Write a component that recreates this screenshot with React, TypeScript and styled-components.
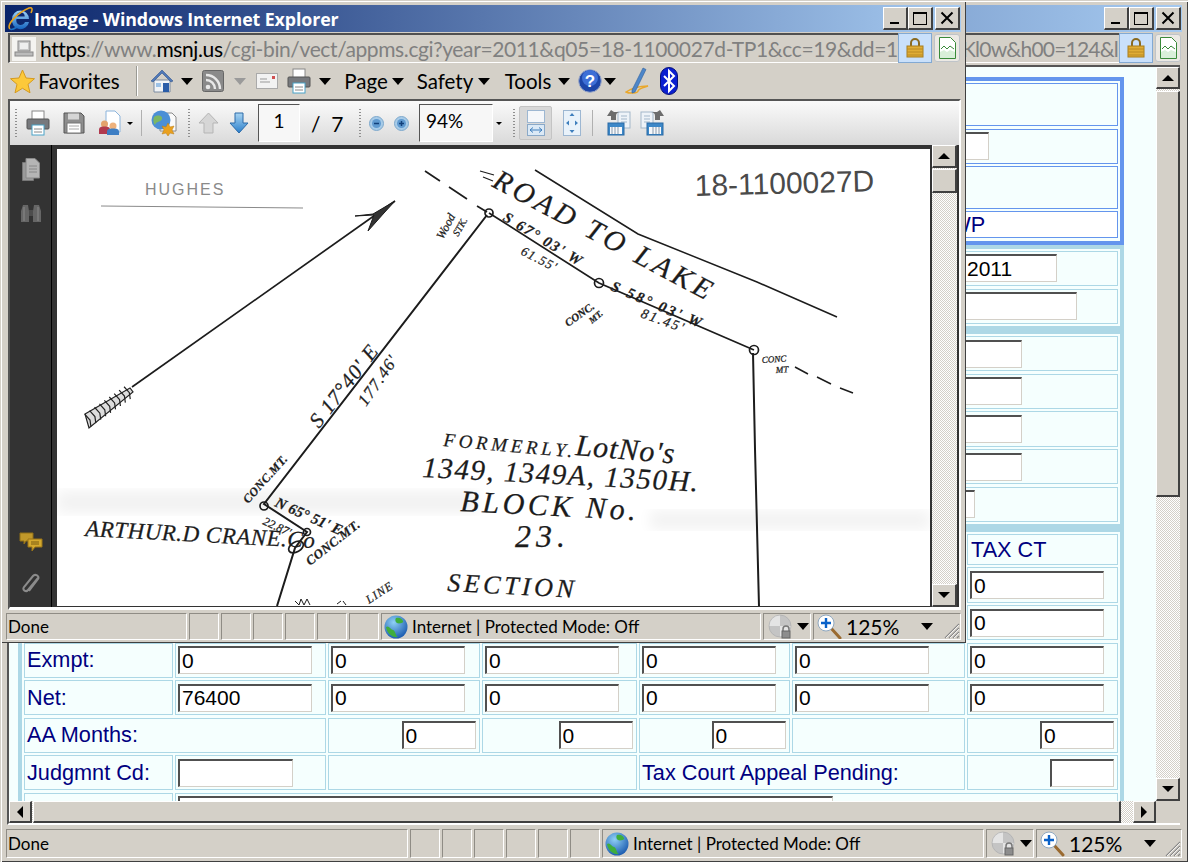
import React from "react";
import styled, { createGlobalStyle, css } from "styled-components";

const ui = `Lato, "Open Sans", sans-serif`;
const face = "#d4d0c8";

const GlobalStyle = createGlobalStyle`
  html, body { margin: 0; padding: 0; background: ${face}; }
  * { box-sizing: border-box; }
  svg { flex: none; }
`;

const outset = css`
  background: ${face};
  border-style: solid;
  border-width: 1px 2px 2px 1px;
  border-color: #fff #404040 #404040 #fff;
`;
const dither = css`
  background: repeating-conic-gradient(${face} 0 25%, #fff 0 50%) 0 0 / 2px 2px;
`;

const Desktop = styled.div`
  position: relative;
  width: 1188px;
  height: 862px;
  overflow: hidden;
`;
const BackWindow = styled.div`
  width: 1188px;
  height: 862px;
  display: flex;
  flex-direction: column;
  padding: 5px 6px 3px 5px;
  background: ${face};
  box-shadow: inset 1px 1px 0 ${face}, inset 2px 2px 0 #fff, inset -1px -1px 0 #404040;
`;
const FrontWindow = styled(BackWindow)`
  position: absolute;
  top: 0;
  left: 0;
  width: 966px;
  height: 643px;
  padding-right: 5px;
`;
const TitleBar = styled.div`
  flex: none;
  height: 27px;
  display: flex;
  align-items: center;
  padding: 0 1px 0 2px;
  background: linear-gradient(90deg, #0a246a, #a6caf0);
`;
const TitleText = styled.span`
  flex: 1;
  margin-left: 0;
  font: bold 17.8px "Open Sans", sans-serif;
  letter-spacing: -0.1px;
  color: #fff;
  white-space: nowrap;
`;
const CaptionButton = styled.span<{ $gap?: number }>`
  ${outset}
  width: 25px;
  height: 23px;
  margin-left: ${(p) => p.$gap ?? 0}px;
  display: flex;
  align-items: center;
  justify-content: center;
`;
const AddressBar = styled.div`
  flex: none;
  height: 30px;
  margin-top: 1px;
  padding-left: 3px;
  display: flex;
`;
const UrlField = styled.div<{ $end?: boolean }>`
  flex: 1;
  min-width: 0;
  overflow: hidden;
  display: flex;
  align-items: center;
  justify-content: ${(p) => (p.$end ? "flex-end" : "flex-start")};
  padding: 0 1px 0 2px;
  border-style: solid;
  border-width: 2px 0 1px 2px;
  border-color: #505050 #fff #fff #505050;
  font: 21px ${ui};
  letter-spacing: ${(p) => (p.$end ? "-0.8px" : "-0.385px")};
  white-space: nowrap;
  color: #808080;
`;
const UrlText = styled.span`
  margin-left: 4px;
  b { font-weight: 400; color: #000; }
`;
const LockBox = styled.div`
  flex: none;
  width: 34px;
  display: flex;
  align-items: center;
  justify-content: center;
  background: #c9e0fb;
  border: 1px solid #82a9d3;
`;
const ReportButton = styled.div`
  flex: none;
  width: 26px;
  height: 28px;
  margin: 1px 1px 0 2px;
  display: flex;
  align-items: center;
  justify-content: center;
  border: 1px solid #bfc4c9;
  border-radius: 3px;
  background: #ece9e4;
`;
const CommandBar = styled.div`
  flex: none;
  height: 36px;
  display: flex;
  align-items: center;
  font: 20.5px ${ui};
  color: #000;
`;
const Slot = styled.span<{ $ml?: number; $w?: number }>`
  flex: none;
  display: inline-flex;
  align-items: center;
  justify-content: center;
  margin-left: ${(p) => p.$ml ?? 0}px;
  width: ${(p) => (p.$w ? `${p.$w}px` : "auto")};
  white-space: nowrap;
`;
const Caret = styled.i<{ $ml?: number; $off?: boolean; $small?: boolean }>`
  flex: none;
  display: block;
  margin-left: ${(p) => p.$ml ?? 0}px;
  border-style: solid;
  border-width: ${(p) => (p.$small ? "3px 3px 0" : "7px 6px 0")};
  border-color: ${(p) => (p.$off ? "#9a9a9a" : "#000")} transparent transparent;
`;
const Divider = styled.span<{ $ml: number; $h?: number }>`
  flex: none;
  width: 2px;
  height: ${(p) => p.$h ?? 30}px;
  margin-left: ${(p) => p.$ml}px;
  border-left: 1px solid #9a9a94;
  border-right: 1px solid #fff;
`;

const ReaderFrame = styled.div`
  flex: none;
  height: 511px;
  margin: 0 0 2px 3px;
  display: flex;
  flex-direction: column;
  border-style: solid;
  border-width: 2px 2px 3px 2px;
  border-color: #555 #fff #fff #555;
`;
const ReaderTools = styled.div`
  flex: none;
  height: 44px;
  display: flex;
  align-items: center;
  background: linear-gradient(#fafafa, #d9d9d9);
`;
const Grip = styled.span<{ $ml: number }>`
  flex: none;
  width: 2px;
  height: 28px;
  margin-left: ${(p) => p.$ml}px;
  background: repeating-linear-gradient(#8f8f8f 0 1px, transparent 1px 3px);
`;
const ToolSep = styled.span<{ $ml: number }>`
  flex: none;
  width: 1px;
  height: 26px;
  margin-left: ${(p) => p.$ml}px;
  background: #b0b0b0;
`;
const BoxField = styled.span<{ $ml: number; $w: number; $center?: boolean }>`
  flex: none;
  width: ${(p) => p.$w}px;
  height: 38px;
  margin-left: ${(p) => p.$ml}px;
  padding: 0 ${(p) => (p.$center ? 0 : 6)}px 6px;
  display: flex;
  align-items: center;
  justify-content: ${(p) => (p.$center ? "center" : "flex-start")};
  background: #f7f7f7;
  border-style: solid;
  border-width: 1px;
  border-color: #555 #fff #fff #555;
  font: 19px ${ui};
`;
const PageCount = styled.span<{ $ml: number; $w: number }>`
  flex: none;
  width: ${(p) => p.$w}px;
  margin-left: ${(p) => p.$ml}px;
  font: 21px ${ui};
  white-space: pre;
`;
const FitButton = styled.span<{ $ml: number }>`
  flex: none;
  width: 33px;
  height: 34px;
  margin-left: ${(p) => p.$ml}px;
  display: flex;
  align-items: center;
  justify-content: center;
  background: #d8d8d8;
  border: 1px solid #c4c4c4;
  border-radius: 2px;
`;
const ReaderBody = styled.div`
  flex: 1;
  min-height: 0;
  display: flex;
  background: #333;
`;
const SideRail = styled.div`
  flex: none;
  width: 42px;
  padding: 13px 0 11px;
  display: flex;
  flex-direction: column;
  align-items: center;
  border-right: 1px solid #000;
`;
const RailIcon = styled.span<{ $push?: boolean; $mt?: number }>`
  display: flex;
  margin-top: ${(p) => (p.$push ? "auto" : `${p.$mt ?? 0}px`)};
`;
const PageArea = styled.div`
  flex: none;
  width: 873px;
  height: 457px;
  margin: 4px 2px 0 5px;
  background: #fff;
  overflow: hidden;
`;
const MapSvg = styled.svg`
  display: block;
  text {
    font-family: "Liberation Serif", serif;
    font-style: italic;
    fill: #1c1c1c;
    stroke: #1c1c1c;
    stroke-width: 0.25;
  }
  text.pencil {
    font-family: "Liberation Sans", sans-serif;
    font-style: normal;
    stroke: none;
  }
`;

const VScroll = styled.div<{ $w: number }>`
  flex: none;
  width: ${(p) => p.$w}px;
  display: flex;
  flex-direction: column;
  ${dither}
`;
const ScrollButton = styled.span<{ $h: number; $w?: number }>`
  ${outset}
  flex: none;
  height: ${(p) => p.$h}px;
  width: ${(p) => (p.$w ? `${p.$w}px` : "auto")};
  display: flex;
  align-items: center;
  justify-content: center;
`;
const ScrollThumb = styled.span<{ $h: number; $mt: number }>`
  ${outset}
  flex: none;
  height: ${(p) => p.$h}px;
  margin-top: ${(p) => p.$mt}px;
`;
const ScrollSpace = styled.span`
  flex: 1;
`;
const ArrowGlyph = styled.i<{ $dir: "up" | "down" | "left" | "right" }>`
  display: block;
  border-style: solid;
  ${(p) =>
    p.$dir === "up" &&
    css`border-width: 0 6px 6px; border-color: transparent transparent #000;`}
  ${(p) =>
    p.$dir === "down" &&
    css`border-width: 6px 6px 0; border-color: #000 transparent transparent;`}
  ${(p) =>
    p.$dir === "left" &&
    css`border-width: 6px 6px 6px 0; border-color: transparent #000 transparent transparent;`}
  ${(p) =>
    p.$dir === "right" &&
    css`border-width: 6px 0 6px 6px; border-color: transparent transparent transparent #000;`}
`;

const StatusBar = styled.div<{ $h: number; $mt: number }>`
  flex: none;
  height: ${(p) => p.$h}px;
  margin-top: ${(p) => p.$mt}px;
  padding-left: 1px;
  display: flex;
  gap: 2px;
  font: 17px ${ui};
  color: #000;
`;
const StatusPane = styled.div<{ $w: number; $grow?: boolean }>`
  flex: ${(p) => (p.$grow ? 1 : "none")};
  width: ${(p) => p.$w}px;
  display: flex;
  align-items: center;
  white-space: nowrap;
  overflow: hidden;
  border-style: solid;
  border-width: 1px;
  border-color: #8f8c85 #fff #fff #8f8c85;
`;
const DoneText = styled.span`
  margin-left: 1px;
`;
const ZoneText = styled.span`
  margin-left: 4px;
`;
const ZoomText = styled.span`
  margin-left: 4px;
  font-size: 21px;
`;
const GripArea = styled.span`
  margin-left: auto;
  display: flex;
  align-self: flex-end;
`;

const Viewport = styled.div`
  flex: none;
  height: 760px;
  margin: 2px 2px 0 2px;
  display: flex;
  flex-direction: column;
  border-top: 2px solid #555;
  border-left: 2px solid #555;
  border-bottom: 2px solid #fff;
`;
const ViewportMain = styled.div`
  flex: 1;
  min-height: 0;
  display: flex;
`;
const PageView = styled.div`
  flex: 1;
  min-width: 0;
  overflow: hidden;
  padding: 10px 0 0 9px;
  background: #f5fffe;
`;
const HScroll = styled.div`
  flex: none;
  height: 22px;
  display: flex;
`;
const HTrack = styled.div`
  flex: 1;
  display: flex;
  ${dither}
`;
const HThumb = styled.span`
  ${outset}
  width: 1088px;
  margin-left: 1px;
`;
const Corner = styled.span`
  flex: none;
  width: 24px;
  background: ${face};
`;

const FormTable = styled.div<{ $blue?: boolean; $rows: string; $cols?: string }>`
  width: 1106px;
  display: grid;
  grid-template-columns: ${(p) => p.$cols ?? "1fr"};
  grid-template-rows: ${(p) => p.$rows};
  gap: 2.5px;
  padding: 2px 2px 2.5px;
  border: 4px solid ${(p) => (p.$blue ? "#6495ed" : "#add8e6")};
  color: #000080;
  font: 21.7px "Liberation Sans", Arial, sans-serif;
  --line: ${(p) => (p.$blue ? "#6495ed" : "#add8e6")};
`;
const Cell = styled.div<{ $span?: number; $pad?: number; $end?: boolean; $white?: boolean }>`
  grid-column: span ${(p) => p.$span ?? 1};
  min-width: 0;
  display: flex;
  align-items: center;
  justify-content: ${(p) => (p.$end ? "flex-end" : "flex-start")};
  padding: 0 ${(p) => (p.$end ? 3 : 0)}px 0 ${(p) => p.$pad ?? 2}px;
  border: 1px solid var(--line);
  background: ${(p) => (p.$white ? "#fff" : "transparent")};
  white-space: nowrap;
`;
const Field = styled.input<{ $w: number }>`
  flex: none;
  width: ${(p) => p.$w}px;
  height: 28px;
  margin: 0;
  padding: 0 0 0 2px;
  background: #fff;
  border-style: solid;
  border-width: 2px 1px 1px 2px;
  border-color: #505050 ${face} ${face} #505050;
  border-radius: 0;
  outline: none;
  color: #000;
  font: 21px "Liberation Sans", Arial, sans-serif;
`;

/* little drawings */
const IELogo = () => (
  <svg width="27" height="27" viewBox="0 0 27 27">
    <defs>
      <linearGradient id="ieb" x1="0" y1="0" x2="0" y2="1">
        <stop offset="0" stopColor="#9fd4f7" />
        <stop offset="1" stopColor="#1565c0" />
      </linearGradient>
    </defs>
    <path d="M5 14a8.5 8.5 0 0 1 17 0H9.5a4.5 4.5 0 0 0 8.5 3h4a8.5 8.5 0 0 1-17-3zm4.7-2.5h8a4 4 0 0 0-8 0z" fill="url(#ieb)" />
    <path d="M3 24C-1 20 10 8 22 3c3-1 4 1 2 5" fill="none" stroke="#e6a11d" strokeWidth="1.6" />
    <path d="M3 24c1 1 4 0 7-2" fill="none" stroke="#1c6fc4" strokeWidth="1.6" />
  </svg>
);
const CapMin = () => (
  <svg width="14" height="14"><rect x="2" y="11" width="9" height="2" fill="#000" /></svg>
);
const CapMax = () => (
  <svg width="16" height="15"><rect x="1.5" y="2" width="13" height="11.5" fill="none" stroke="#000" strokeWidth="1" /><rect x="1" y="1" width="14" height="2" fill="#000" /></svg>
);
const CapClose = () => (
  <svg width="14" height="14"><path d="M1.5 1.5l11 11M12.5 1.5l-11 11" stroke="#000" strokeWidth="2" /></svg>
);
const SiteIcon = () => (
  <svg width="24" height="24" viewBox="0 0 24 24">
    <rect width="24" height="24" fill="#f4f3f0" />
    <rect x="6" y="4" width="12" height="10" fill="#c8c8c8" stroke="#888" />
    <rect x="8" y="6" width="8" height="6" fill="#eee" />
    <rect x="3" y="15" width="18" height="4" fill="#bbb" stroke="#888" />
  </svg>
);
const Lock = () => (
  <svg width="18" height="22" viewBox="0 0 18 22">
    <path d="M5 10V6a4 4 0 0 1 8 0v4" fill="none" stroke="#8a6a20" strokeWidth="2" />
    <rect x="1" y="9" width="16" height="11" fill="#e0ad35" stroke="#a87c1c" />
    <path d="M1 12h16M1 15h16M1 18h16" stroke="#b98a24" />
  </svg>
);
const ReportDoc = () => (
  <svg width="17" height="22" viewBox="0 0 17 22">
    <path d="M.5.5h11l5 5v16H.5z" fill="#fff" stroke="#3a8a3a" />
    <path d="M2 12l3-3 3 3 3-3 4 3" fill="none" stroke="#3a8a3a" />
    <path d="M1 15l4-2 3 2 3-2 5 2v6H1z" fill="#d9efd9" />
  </svg>
);
const Star = () => (
  <svg width="25" height="25" viewBox="0 0 25 25">
    <path d="M12.5 1l3.5 8 8.5.7-6.5 5.6 2 8.5-7.5-4.5-7.5 4.5 2-8.5L.5 9.700l8.500-.7z" fill="#fcc93a" stroke="#d59a1e" />
  </svg>
);
const Home = () => (
  <svg width="24" height="24" viewBox="0 0 24 24">
    <path d="M4 11h16v12H4z" fill="#f1f3f6" stroke="#7a8aa0" />
    <path d="M1 12L12 1l11 11-2 1-9-9-9 9z" fill="#4f78b8" stroke="#33568c" strokeWidth=".6" />
    <rect x="13" y="14" width="6" height="9" fill="#2a5ca8" />
    <rect x="6" y="14" width="5" height="4" fill="#9cc1e6" />
  </svg>
);
const Feed = () => (
  <svg width="22" height="24" viewBox="0 0 22 24">
    <rect x=".5" y="1.500" width="21" height="21" rx="2" fill="#8a8a8a" stroke="#666" />
    <circle cx="6" cy="18" r="2.300" fill="#e8e8e8" />
    <path d="M4 11a9 9 0 0 1 9 9M4 6a14 14 0 0 1 14 14" fill="none" stroke="#e8e8e8" strokeWidth="2.400" />
  </svg>
);
const Mail = () => (
  <svg width="22" height="16" viewBox="0 0 22 16">
    <rect x=".5" y=".5" width="21" height="15" fill="#f2f2f2" stroke="#aaa" />
    <path d="M4 9h10M4 6h7" stroke="#999" />
    <rect x="16" y="3" width="3" height="3" fill="#d05050" />
  </svg>
);
const Printer = () => (
  <svg width="24" height="26" viewBox="0 0 24 26">
    <rect x="6" y="1" width="12" height="9" fill="#fff" stroke="#888" />
    <rect x="1" y="9" width="22" height="10" rx="1" fill="#77797d" stroke="#555" />
    <rect x="6" y="15" width="12" height="10" fill="#fff" stroke="#4aa3c8" />
    <path d="M8 19h8M8 22h8" stroke="#888" />
  </svg>
);
const Help = () => (
  <svg width="24" height="24" viewBox="0 0 24 24">
    <circle cx="12" cy="12" r="11.300" fill="#1d46a8" stroke="#9aa7c8" />
    <circle cx="12" cy="9" r="8" fill="#3d6fd6" />
    <text x="12" y="18" textAnchor="middle" fontFamily="Liberation Sans" fontWeight="bold" fontSize="17" fill="#fff">?</text>
  </svg>
);
const Pen = () => (
  <svg width="26" height="28" viewBox="0 0 26 28">
    <path d="M1 25c6-4 14-6 22-6-6 2-10 3-10 5s-8 3-12 1z" fill="none" stroke="#e9a72b" strokeWidth="1.500" />
    <path d="M7 23L18 1l3 1.500L10 25l-3 1z" fill="#4d86c9" stroke="#2f5f9c" strokeWidth=".6" />
  </svg>
);
const Bluetooth = () => (
  <svg width="18" height="28" viewBox="0 0 18 28">
    <rect x=".5" y=".5" width="17" height="27" rx="8.500" fill="#0a1fd0" stroke="#06107a" />
    <path d="M4 9l10 10-5 5V4l5 5L4 19" fill="none" stroke="#fff" strokeWidth="2" />
  </svg>
);
const Globe = () => (
  <svg width="24" height="26" viewBox="0 0 24 26">
    <defs>
      <radialGradient id="glb" cx=".4" cy=".3" r=".8">
        <stop offset="0" stopColor="#8fd0f5" />
        <stop offset="1" stopColor="#0f4fa8" />
      </radialGradient>
    </defs>
    <circle cx="12" cy="13" r="11.500" fill="url(#glb)" />
    <path d="M2 13c3-2 4 2 7 3s2 6 5 7c-5 1-11-3-12-10zM12 4c4-1 6 1 7 3s-4 3-6 2-2-4-1-5z" fill="#3fae3c" />
  </svg>
);
const SecurityDisc = () => (
  <svg width="26" height="26" viewBox="0 0 26 26">
    <circle cx="13" cy="12" r="11" fill="#e4e4e4" stroke="#bbb" />
    <path d="M13 1a11 11 0 0 1 11 11H13zM2 12a11 11 0 0 0 11 11V12z" fill="#a9a9a9" opacity=".55" />
    <path d="M16 17v-2a3 3 0 0 1 6 0v2" fill="none" stroke="#777" strokeWidth="1.500" />
    <rect x="15" y="17" width="8" height="7" fill="#8d8d8d" stroke="#666" />
  </svg>
);
const ZoomGlass = () => (
  <svg width="25" height="26" viewBox="0 0 25 26">
    <path d="M13 13l10 11" stroke="#9a6a30" strokeWidth="3" strokeLinecap="round" />
    <circle cx="9" cy="9" r="8" fill="#fff" stroke="#8fa8c0" />
    <path d="M9 4v10M4 9h10" stroke="#0a62c9" strokeWidth="2.400" />
  </svg>
);
const SizeGrip = () => (
  <svg width="18" height="18" viewBox="0 0 18 18">
    <path d="M17 3L3 17M17 7L7 17M17 11L11 17M17 15l-2 2" stroke="#888" strokeWidth="1.200" />
    <path d="M17 4L4 17M17 8L8 17M17 12l-5 5" stroke="#fff" strokeWidth=".8" />
  </svg>
);

/* reader toolbar */
const SaveDisk = () => (
  <svg width="22" height="24" viewBox="0 0 22 24">
    <path d="M1 2h17l3 3v17H1z" fill="#8e8e8e" stroke="#555" />
    <rect x="5" y="2.500" width="11" height="6" fill="#d5d5d5" />
    <rect x="4" y="12" width="14" height="10" fill="#fff" stroke="#777" />
    <path d="M6 15h10M6 18h10" stroke="#aaa" />
  </svg>
);
const ShareDoc = () => (
  <svg width="22" height="26" viewBox="0 0 22 26">
    <path d="M7 1h9l5 5v16H7z" fill="#fff" stroke="#8bb4dc" />
    <circle cx="5.500" cy="14" r="3.500" fill="#e3a26d" />
    <path d="M0 24v-4c0-3 2-3.500 5.500-3.500S11 17 11 20v4z" fill="#b13a4f" />
    <circle cx="14" cy="16" r="3.500" fill="#efb27c" />
    <path d="M8 25v-3c0-3 2-3.500 6-3.500s6 .5 6 3.500v3z" fill="#3d7ec4" />
  </svg>
);
const WebDoc = () => (
  <svg width="26" height="28" viewBox="0 0 26 28">
    <path d="M9 4h12l4 4v14H9z" fill="#fafafa" stroke="#8a8a8a" />
    <circle cx="10" cy="11" r="9.500" fill="#4b8fd6" />
    <path d="M3 8c4-3 9-1 8 2s-6 2-7 6c-2-2-2-6-1-8z" fill="#7cb764" />
    <path d="M17 14l2 4 4-1-2 4 2 4-4-1-2 3-2-3-4 1 2-4-2-4 4 1z" fill="#eaa11f" stroke="#b87a10" strokeWidth=".5" />
  </svg>
);
const PageUp = () => (
  <svg width="21" height="22" viewBox="0 0 21 22">
    <path d="M10.500 1L20 11h-5v10H6V11H1z" fill="#d6d6d6" stroke="#b5b5b5" />
  </svg>
);
const PageDown = () => (
  <svg width="20" height="22" viewBox="0 0 20 22">
    <defs>
      <linearGradient id="dn" x1="0" y1="0" x2="0" y2="1">
        <stop offset="0" stopColor="#a8d4f2" />
        <stop offset="1" stopColor="#2b7fcb" />
      </linearGradient>
    </defs>
    <path d="M6 1h8v10h5L10 21 1 11h5z" fill="url(#dn)" stroke="#2c6aa8" />
  </svg>
);
const ZoomDisc = ({ plus }: { plus?: boolean }) => (
  <svg width="15" height="15" viewBox="0 0 15 15">
    <circle cx="7.500" cy="7.500" r="7" fill="#a7cbe8" stroke="#7ea9cc" />
    <circle cx="7.500" cy="7.500" r="4.500" fill="#5f9ad0" />
    <path d={plus ? "M5 7.500h5M7.500 5v5" : "M5 7.500h5"} stroke="#12407a" strokeWidth="1.500" />
  </svg>
);
const FitWidth = () => (
  <svg width="18" height="26" viewBox="0 0 18 26">
    <rect x=".5" y=".5" width="17" height="12" fill="#f5f7fa" stroke="#9db7d2" />
    <rect x=".5" y="14.500" width="17" height="11" fill="#dbe9f6" stroke="#8aa9c8" />
    <path d="M3 20h12M3 20l3-2.500M3 20l3 2.500M15 20l-3-2.500M15 20l-3 2.500" stroke="#3f7fbd" fill="none" />
  </svg>
);
const FitPage = () => (
  <svg width="18" height="26" viewBox="0 0 18 26">
    <rect x=".5" y=".5" width="17" height="25" fill="#e9f2fa" stroke="#9db7d2" />
    <path d="M9 3l-2.500 3h5zM9 23l-2.500-3h5zM3 13l3-2.500v5zM15 13l-3-2.500v5z" fill="#3f7fbd" />
  </svg>
);
const Rotate = ({ flip }: { flip?: boolean }) => (
  <svg width="25" height="28" viewBox="0 0 25 28" style={flip ? { transform: "scaleX(-1)" } : undefined}>
    <rect x="12" y="3" width="12" height="16" fill="#eef3f8" stroke="#a3b7ca" />
    <path d="M15 7h6M15 10h6M15 13h6" stroke="#a3b7ca" />
    <path d="M10 11V7c0-3 2-4 4-4H8L5 1 1 7h4v4z" fill="#6c6c6c" />
    <rect x="2" y="14" width="16" height="12" fill="#3d88c8" stroke="#2b6aa5" />
    <rect x="4" y="18" width="12" height="7" fill="#f6f8fb" />
    <path d="M6 18v7M9 18v7M12 18v7" stroke="#8a9bac" />
  </svg>
);
const RailPages = () => (
  <svg width="18" height="23" viewBox="0 0 18 23">
    <path d="M.5 4.500h11v18H.5z" fill="#9a9a9a" stroke="#777" />
    <path d="M4 .5h9l4.500 4.500v15H4z" fill="#b5b5b5" stroke="#888" />
    <path d="M7 8h8M7 11h8M7 14h8" stroke="#888" />
  </svg>
);
const RailBinoculars = () => (
  <svg width="22" height="20" viewBox="0 0 22 20">
    <path d="M1 8l2-6h5l1 6v11H1zM21 8l-2-6h-5l-1 6v11h8z" fill="#666" />
    <rect x="9" y="7" width="4" height="6" fill="#4d4d4d" />
    <path d="M4 4v14M18 4v14" stroke="#8a8a8a" />
  </svg>
);
const RailComments = () => (
  <svg width="24" height="20" viewBox="0 0 24 20">
    <path d="M1 1h13v8H7l-2 3V9H1z" fill="#c0982a" stroke="#8f6e17" />
    <path d="M9 7h14v8h-7l-3 4v-4H9z" fill="#d4a92e" stroke="#9a7518" />
    <path d="M12 10h8M12 12h8" stroke="#7a5c10" />
  </svg>
);
const RailClip = () => (
  <svg width="20" height="23" viewBox="0 0 20 23">
    <path d="M17 5L7 17c-2 2.500-6 0-4-3L12 3c2-2.500 7 0 5 3L8 18" fill="none" stroke="#8b8b8b" strokeWidth="2" />
  </svg>
);

/* the scanned survey sheet: drawn in page coordinates */
const Lbl = ({ x, y, r = 0, s, ls = 0, w = 400, children }: { x: number; y: number; r?: number; s: number; ls?: number; w?: number; children: React.ReactNode }) => (
  <text transform={`translate(${x} ${y}) rotate(${r})`} fontSize={s} letterSpacing={ls} fontWeight={w}>
    {children}
  </text>
);
const chevrons = [0, 6, 12, 18, 24, 30, 36, 42, 48];
const Fletching = () => (
  <g fill="none" stroke="#222" strokeWidth="1.200">
    <path d="M85 415L130 389 133 393 89 429z" fill="#ddd" />
    {chevrons.map((t) => {
      const px = 90 + 0.82 * t;
      const py = 421 - 0.57 * t;
      return (
        <path
          key={t}
          d={`M${px - 5.300} ${py - 5.900}L${px} ${py}L${px + 0.900} ${py + 6.500}`}
        />
      );
    })}
  </g>
);
const SurveyMap = () => (
  <MapSvg width="873" height="457" viewBox="57 150 873 457">
    <defs>
      <filter id="smear"><feGaussianBlur stdDeviation="7" /></filter>
    </defs>
    <rect x="57" y="492" width="420" height="22" fill="#000" opacity=".05" filter="url(#smear)" />
    <rect x="650" y="512" width="280" height="18" fill="#000" opacity=".05" filter="url(#smear)" />
    <g fill="none" stroke="#1c1c1c" strokeWidth="1.700">
      <path d="M425 172l15 10M449 188l18 12M477 207l10 6" />
      <path d="M489 214L599 284 754 351" />
      <path d="M795 368l13 7M817 378l14 7M840 389l13 5" strokeWidth="1.500" />
      <path d="M535 171L638 235 757 283 837 318" strokeWidth="1.500" />
      <path d="M753 354L755 450 759 607" strokeWidth="2" />
      <path d="M487 216L264 505 307 533 295 549 277 607" strokeWidth="2" />
      <circle cx="489" cy="214" r="4" />
      <circle cx="599" cy="284" r="4.500" />
      <circle cx="754" cy="351" r="4.500" />
      <circle cx="264" cy="507" r="4" />
      <circle cx="307" cy="533" r="3.500" />
      <ellipse cx="296" cy="548" rx="8" ry="5" transform="rotate(-30 296 548)" />
      <path d="M132 388L395 202" />
      <path d="M355 217l18-2 22-13-11 12-16 18 6-16z" fill="#333" strokeWidth="1" />
      <path d="M480 172l14 4M483 178l10 4" strokeWidth="1.200" />
      <path d="M295 602l4 4 2-6 3 6 3-6 3 6M337 605l4-3M343 602l3 4" strokeWidth="1" />
    </g>
    <Fletching />
    <path d="M101 207l202 2" stroke="#8a8a8a" strokeWidth="1" />
    <Lbl x={491} y={187} r={28} s={29} ls={4}>ROAD TO LAKE</Lbl>
    <Lbl x={502} y={221} r={31} s={15} ls={1.600} w={700}>S 67° 03' W</Lbl>
    <Lbl x={520} y={255} r={27} s={13} ls={1.200}>61.55'</Lbl>
    <Lbl x={610} y={291} r={23} s={15} ls={2.400} w={700}>S 58° 03' W</Lbl>
    <Lbl x={640} y={318} r={20} s={14} ls={2}>81.45'</Lbl>
    <Lbl x={568} y={328} r={-35} s={11} w={700}>CONC.</Lbl>
    <Lbl x={592} y={325} r={-40} s={9} w={700}>MT.</Lbl>
    <Lbl x={762} y={364} r={-4} s={9}>CONC</Lbl>
    <Lbl x={776} y={374} r={-4} s={9}>MT</Lbl>
    <Lbl x={443} y={241} r={-62} s={12}>Wood</Lbl>
    <Lbl x={458} y={238} r={-60} s={10}>STK.</Lbl>
    <Lbl x={319} y={430} r={-52} s={21} ls={1}>S 17°40' E</Lbl>
    <Lbl x={366} y={408} r={-55} s={17} ls={1}>177.46'</Lbl>
    <Lbl x={248} y={505} r={-48} s={12} ls={.5} w={700}>CONC.MT.</Lbl>
    <Lbl x={274} y={507} r={24} s={15} w={700}>N 65° 51' E</Lbl>
    <Lbl x={262} y={525} r={25} s={12}>22.87'</Lbl>
    <Lbl x={85} y={537} r={3} s={23} ls={.5}>ARTHUR.D CRANE.Co</Lbl>
    <Lbl x={310} y={567} r={-38} s={13} ls={.5} w={700}>CONC.MT.</Lbl>
    <Lbl x={369} y={605} r={-33} s={12} ls={1}>LINE</Lbl>
    <Lbl x={443} y={447} r={5} s={19} ls={3.700}>FORMERLY.</Lbl>
    <Lbl x={575} y={456} r={5} s={30} ls={1}>LotNo's</Lbl>
    <Lbl x={422} y={478} r={3} s={29} ls={1.500}>1349, 1349A, 1350H.</Lbl>
    <Lbl x={460} y={512} r={3} s={30} ls={3.600}>BLOCK No.</Lbl>
    <Lbl x={515} y={548} s={32} ls={5}>23.</Lbl>
    <Lbl x={447} y={592} r={3} s={26} ls={3.500}>SECTION</Lbl>
    <text className="pencil" x="145" y="196" fontSize="16" letterSpacing="2" style={{ fill: "#8a8a8a" }}>HUGHES</text>
    <text className="pencil" x="695" y="197" fontSize="30" transform="rotate(-1.500 695 197)" style={{ fill: "#4a4a4a" }}>18-1100027D</text>
  </MapSvg>
);

const Caption = () => (
  <>
    <CaptionButton><CapMin /></CaptionButton>
    <CaptionButton><CapMax /></CaptionButton>
    <CaptionButton $gap={2}><CapClose /></CaptionButton>
  </>
);
const ZonePanes = () => (
  <>
    <StatusPane $w={48}>
      <Slot $ml={3}><SecurityDisc /></Slot>
      <Caret $ml={4} />
    </StatusPane>
    <StatusPane $w={145} $grow>
      <Slot $ml={3}><ZoomGlass /></Slot>
      <ZoomText>125%</ZoomText>
      <Caret $ml={22} />
      <GripArea><SizeGrip /></GripArea>
    </StatusPane>
  </>
);

const colWidths = "148.5px 150.5px 151.5px 154.5px 150.5px 172.5px 151px";

function BackForm() {
  return (
    <>
      <FormTable $blue $rows="43px 35px 42.5px 27px">
        <Cell />
        <Cell $pad={900}><Field $w={64} readOnly /></Cell>
        <Cell />
        <Cell $white $pad={912}>TWP</Cell>
      </FormTable>
      <FormTable $rows="35.5px 35px">
        <Cell $pad={938}><Field $w={94} readOnly value="2011" /></Cell>
        <Cell $pad={938}><Field $w={114} readOnly /></Cell>
      </FormTable>
      <FormTable $rows="repeat(5, 35.2px)">
        <Cell $pad={900}><Field $w={97} readOnly /></Cell>
        <Cell $pad={900}><Field $w={97} readOnly /></Cell>
        <Cell $pad={900}><Field $w={97} readOnly /></Cell>
        <Cell $pad={900}><Field $w={97} readOnly /></Cell>
        <Cell $pad={900}><Field $w={50} readOnly /></Cell>
      </FormTable>
      <FormTable $cols={colWidths} $rows="30.5px 35.5px 35px 35px 35px 35px 35px 35px">
        <Cell />
        <Cell />
        <Cell />
        <Cell />
        <Cell />
        <Cell />
        <Cell $pad={3}>TAX CT</Cell>
        {[0, 1].map((r) => (
          <React.Fragment key={r}>
            <Cell />
            {[1, 2, 3, 4, 5, 6].map((c) => (
              <Cell key={c}><Field $w={134} readOnly value="0" /></Cell>
            ))}
          </React.Fragment>
        ))}
        <Cell>Exmpt:</Cell>
        {[1, 2, 3, 4, 5, 6].map((c) => (
          <Cell key={c}><Field $w={134} readOnly value="0" /></Cell>
        ))}
        <Cell>Net:</Cell>
        <Cell><Field $w={134} readOnly value="76400" /></Cell>
        {[2, 3, 4, 5, 6].map((c) => (
          <Cell key={c}><Field $w={134} readOnly value="0" /></Cell>
        ))}
        <Cell $span={2}>AA Months:</Cell>
        <Cell $end><Field $w={74} readOnly value="0" /></Cell>
        <Cell $end><Field $w={74} readOnly value="0" /></Cell>
        <Cell $end><Field $w={74} readOnly value="0" /></Cell>
        <Cell />
        <Cell $end><Field $w={74} readOnly value="0" /></Cell>
        <Cell>Judgmnt Cd:</Cell>
        <Cell><Field $w={115} readOnly /></Cell>
        <Cell $span={2} />
        <Cell $span={2}>Tax Court Appeal Pending:</Cell>
        <Cell $end><Field $w={64} readOnly /></Cell>
        <Cell />
        <Cell $span={6}><Field $w={655} readOnly /></Cell>
      </FormTable>
    </>
  );
}

export default function App() {
  return (
    <>
      <GlobalStyle />
      <Desktop>
        <BackWindow>
          <TitleBar>
            <TitleText />
            <Caption />
          </TitleBar>
          <AddressBar>
            <UrlField $end>
              <UrlText>Kl0w&amp;h00=124&amp;l</UrlText>
            </UrlField>
            <LockBox><Lock /></LockBox>
            <ReportButton><ReportDoc /></ReportButton>
          </AddressBar>
          <Viewport>
            <ViewportMain>
              <PageView><BackForm /></PageView>
              <VScroll $w={24}>
                <ScrollButton $h={22}><ArrowGlyph $dir="up" /></ScrollButton>
                <ScrollThumb $h={406} $mt={2} />
                <ScrollSpace />
                <ScrollButton $h={23}><ArrowGlyph $dir="down" /></ScrollButton>
              </VScroll>
            </ViewportMain>
            <HScroll>
              <HTrack>
                <ScrollButton $h={22} $w={23}><ArrowGlyph $dir="left" /></ScrollButton>
                <HThumb />
                <ScrollSpace />
                <ScrollButton $h={22} $w={23}><ArrowGlyph $dir="right" /></ScrollButton>
              </HTrack>
              <Corner />
            </HScroll>
          </Viewport>
          <StatusBar $h={29} $mt={4}>
            <StatusPane $w={402}><DoneText>Done</DoneText></StatusPane>
            {[0, 1, 2, 3, 4, 5].map((i) => <StatusPane key={i} $w={30} />)}
            <StatusPane $w={382}>
              <Slot $ml={2}><Globe /></Slot>
              <ZoneText>Internet | Protected Mode: Off</ZoneText>
            </StatusPane>
            <ZonePanes />
          </StatusBar>
        </BackWindow>

        <FrontWindow>
          <TitleBar>
            <IELogo />
            <TitleText>Image - Windows Internet Explorer</TitleText>
            <Caption />
          </TitleBar>
          <AddressBar>
            <UrlField>
              <SiteIcon />
              <UrlText><b>https</b>://www.<b>msnj.us</b>/cgi-bin/vect/appms.cgi?year=2011&amp;q05=18-1100027d-TP1&amp;cc=19&amp;dd=1</UrlText>
            </UrlField>
            <LockBox><Lock /></LockBox>
            <ReportButton><ReportDoc /></ReportButton>
          </AddressBar>
          <CommandBar>
            <Slot $ml={5}><Star /></Slot>
            <Slot $ml={3} $w={82}>Favorites</Slot>
            <Divider $ml={16} />
            <Slot $ml={12}><Home /></Slot>
            <Caret $ml={7} />
            <Slot $ml={9}><Feed /></Slot>
            <Caret $ml={10} $off />
            <Slot $ml={10}><Mail /></Slot>
            <Slot $ml={9}><Printer /></Slot>
            <Caret $ml={8} />
            <Slot $ml={14} $w={42}>Page</Slot>
            <Caret $ml={5} />
            <Slot $ml={14} $w={54}>Safety</Slot>
            <Caret $ml={6} />
            <Slot $ml={14} $w={48}>Tools</Slot>
            <Caret $ml={6} />
            <Slot $ml={8}><Help /></Slot>
            <Caret $ml={2} />
            <Slot $ml={9}><Pen /></Slot>
            <Slot $ml={9}><Bluetooth /></Slot>
          </CommandBar>
          <ReaderFrame>
            <ReaderTools>
              <Grip $ml={5} />
              <Slot $ml={9}><Printer /></Slot>
              <Slot $ml={13}><SaveDisk /></Slot>
              <Slot $ml={14}><ShareDoc /></Slot>
              <Caret $ml={6} $small />
              <ToolSep $ml={8} />
              <Slot $ml={9}><WebDoc /></Slot>
              <Grip $ml={11} />
              <Slot $ml={8}><PageUp /></Slot>
              <Slot $ml={10}><PageDown /></Slot>
              <BoxField $ml={9} $w={42} $center>1</BoxField>
              <PageCount $ml={11} $w={27}>/  7</PageCount>
              <Grip $ml={21} />
              <Slot $ml={8}><ZoomDisc /></Slot>
              <Slot $ml={10}><ZoomDisc plus /></Slot>
              <BoxField $ml={10} $w={74}>94%</BoxField>
              <Caret $ml={3} $small />
              <Grip $ml={11} />
              <FitButton $ml={4}><FitWidth /></FitButton>
              <Slot $ml={11}><FitPage /></Slot>
              <ToolSep $ml={11} />
              <Slot $ml={13}><Rotate /></Slot>
              <Slot $ml={9}><Rotate flip /></Slot>
            </ReaderTools>
            <ReaderBody>
              <SideRail>
                <RailIcon><RailPages /></RailIcon>
                <RailIcon $mt={22}><RailBinoculars /></RailIcon>
                <RailIcon $push><RailComments /></RailIcon>
                <RailIcon $mt={21}><RailClip /></RailIcon>
              </SideRail>
              <PageArea><SurveyMap /></PageArea>
              <VScroll $w={25}>
                <ScrollButton $h={23}><ArrowGlyph $dir="up" /></ScrollButton>
                <ScrollThumb $h={24} $mt={1} />
                <ScrollSpace />
                <ScrollButton $h={23}><ArrowGlyph $dir="down" /></ScrollButton>
              </VScroll>
            </ReaderBody>
          </ReaderFrame>
          <StatusBar $h={27} $mt={1}>
            <StatusPane $w={181}><DoneText>Done</DoneText></StatusPane>
            {[0, 1, 2, 3, 4, 5].map((i) => <StatusPane key={i} $w={30} />)}
            <StatusPane $w={380}>
              <Slot $ml={2}><Globe /></Slot>
              <ZoneText>Internet | Protected Mode: Off</ZoneText>
            </StatusPane>
            <ZonePanes />
          </StatusBar>
        </FrontWindow>
      </Desktop>
    </>
  );
}
